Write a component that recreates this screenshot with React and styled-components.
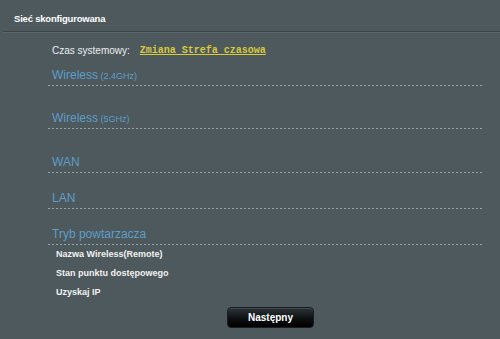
import styled, { createGlobalStyle } from "styled-components";

const GlobalStyle = createGlobalStyle`
  html, body {
    margin: 0;
    padding: 0;
    background-color: #4d595d;
  }
`

const Page = styled.div`
  width: 500px;
  height: 339px;
  background-color: #4d595d;
  font-family: "Liberation Sans", Arial, sans-serif;
  display: flex;
  flex-direction: column;
  overflow: hidden;
`

const Header = styled.header`
  height: 32px;
  box-sizing: border-box;
  margin-left: 3px;
  padding: 13px 0 0 11px;
  border-bottom: 1px solid #3c4649;
  box-shadow: 0 1px 0 #5c676b;
  color: #ffffff;
  font-size: 9.5px;
  line-height: 12px;
  font-weight: bold;
  letter-spacing: -0.2px;
`

const Content = styled.div`
  width: 436px;
  margin-left: 48px;
  display: flex;
  flex-direction: column;
`

const TimeRow = styled.div`
  margin-top: 12px;
  padding-left: 4px;
  height: 14px;
  line-height: 14px;
  display: flex;
  align-items: center;
  gap: 10px;
  font-size: 10px;
  color: #eceeef;
`

const TimeLink = styled.a`
  font-family: "Liberation Mono", "Courier New", monospace;
  font-size: 10px;
  font-weight: bold;
  color: #d9c93c;
  text-decoration: underline;
  cursor: pointer;
`

const SectionHeading = styled.div`
  margin-top: ${(p) => p.$gap}px;
  height: 22px;
  padding-left: 4px;
  line-height: 24px;
  font-size: 12px;
  color: #5f9dc8;
  background-image: linear-gradient(to right, #9aa3a7 50%, transparent 50%);
  background-size: 4px 1px;
  background-repeat: repeat-x;
  background-position: left bottom;
  box-sizing: content-box;
  padding-bottom: 1px;
`

const Band = styled.span`
  font-size: 9px;
`

const ItemList = styled.ul`
  list-style: none;
  margin: 0;
  padding: 0 0 0 8px;
`

const Item = styled.li`
  height: 19px;
  line-height: 19px;
  font-size: 9px;
  font-weight: bold;
  color: #f2f2f2;
`

const ButtonRow = styled.div`
  margin-top: 5px;
  padding-left: 179px;
`

const NextButton = styled.button`
  width: 87px;
  height: 21px;
  border: 1px solid #1a1e20;
  border-radius: 4px;
  background: linear-gradient(to bottom, #2c3336 0%, #0d1012 55%, #000000 100%);
  box-shadow: inset 0 1px 0 rgba(255, 255, 255, 0.12);
  color: #ffffff;
  font-family: "Liberation Sans", Arial, sans-serif;
  font-size: 10px;
  font-weight: bold;
  padding: 0;
  cursor: pointer;
`

const sections = [
  { name: "Wireless", band: "(2.4GHz)", gap: 5 },
  { name: "Wireless", band: "(5GHz)", gap: 20 },
  { name: "WAN", gap: 21 },
  { name: "LAN", gap: 13 },
  { name: "Tryb powtarzacza", gap: 13 },
];

export default function App() {
  return (
    <Page>
      <GlobalStyle />
      <Header>Sieć skonfigurowana</Header>
      <Content>
        <TimeRow>
          <span>Czas systemowy:</span>
          <TimeLink>Zmiana Strefa czasowa</TimeLink>
        </TimeRow>
        {sections.map((s, i) => (
          <SectionHeading key={i} $gap={s.gap}>
            {s.name}
            {s.band && <Band> {s.band}</Band>}
          </SectionHeading>
        ))}
        <ItemList>
          <Item>Nazwa Wireless(Remote)</Item>
          <Item>Stan punktu dostępowego</Item>
          <Item>Uzyskaj IP</Item>
        </ItemList>
        <ButtonRow>
          <NextButton>Następny</NextButton>
        </ButtonRow>
      </Content>
    </Page>
  );
}
